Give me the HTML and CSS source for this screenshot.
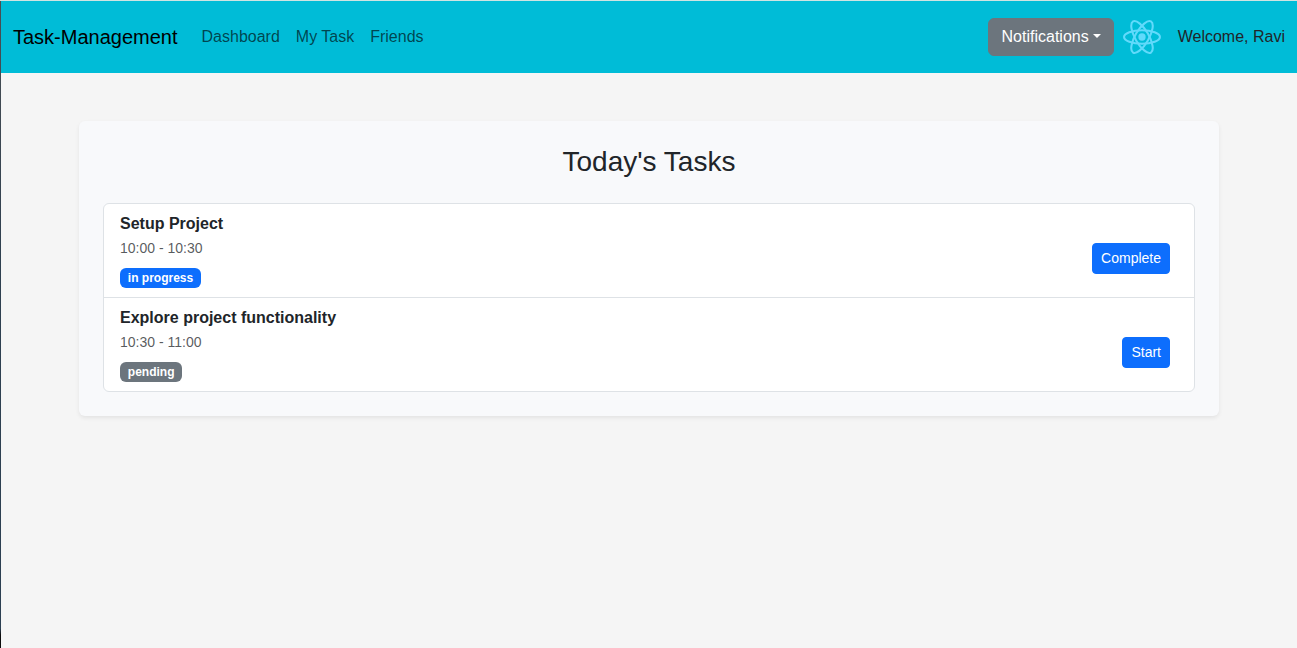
FILE: index.html
```html
<!DOCTYPE html>
<html lang="en">
<head>
<meta charset="utf-8">
<title>Task-Management</title>
<link rel="stylesheet" href="styles.css">
</head>
<body>
<nav class="navbar">
  <a class="brand">Task-Management</a>
  <div class="nav-links">
    <a class="nav-link">Dashboard</a>
    <a class="nav-link">My Task</a>
    <a class="nav-link">Friends</a>
  </div>
  <button class="btn btn-secondary">Notifications<span class="caret"></span></button>
  <svg class="avatar" viewBox="-11.5 -10.23174 23 20.46348">
    <circle r="2.2" fill="#61dafb"/>
    <g stroke="#61dafb" stroke-width="1.25" fill="none">
      <ellipse rx="10.8" ry="4.1"/>
      <ellipse rx="10.8" ry="4.1" transform="rotate(60)"/>
      <ellipse rx="10.8" ry="4.1" transform="rotate(120)"/>
    </g>
  </svg>
  <span class="welcome">Welcome, Ravi</span>
</nav>
<main class="card">
  <h3 class="card-title">Today's Tasks</h3>
  <ul class="task-list">
    <li class="task">
      <div class="task-info">
        <strong class="task-name">Setup Project</strong>
        <span class="task-time">10:00 - 10:30</span>
        <span class="badge badge-primary">in progress</span>
      </div>
      <button class="btn btn-primary">Complete</button>
    </li>
    <li class="task">
      <div class="task-info">
        <strong class="task-name">Explore project functionality</strong>
        <span class="task-time">10:30 - 11:00</span>
        <span class="badge badge-secondary">pending</span>
      </div>
      <button class="btn btn-primary">Start</button>
    </li>
  </ul>
</main>
</body>
</html>
```

FILE: styles.css
```css
* { box-sizing: border-box; }
body {
  margin: 0;
  min-height: 100vh;
  padding-left: 1px;
  border-top: 1px solid #d0e4e2;
  background: linear-gradient(#4a4f54, #2f4050 40%, #2c3f52 97%, #0c0c0c 98%) 0 0 / 1px 100% no-repeat #f5f5f5;
  color: #212529;
  font: 16px/24px "Liberation Sans", Arial, sans-serif;
}
.navbar {
  display: flex;
  align-items: center;
  height: 72px;
  padding: 0 12px;
  background: #00bcd7;
}
.brand {
  margin-right: 16px;
  font-size: 20px;
  line-height: 30px;
  color: #000;
}
.nav-links { display: flex; flex: 1; }
.nav-link { padding: 8px; color: rgba(0, 0, 0, .65); }
.btn {
  border: 1px solid;
  color: #fff;
  font-family: inherit;
  white-space: nowrap;
}
.btn-secondary {
  padding: 6px 12px 6px 12.4px;
  border-color: #6c757d;
  border-radius: 6px;
  background: #6c757d;
  font-size: 16px;
  line-height: 24px;
}
.caret {
  display: inline-block;
  margin-left: 4px;
  vertical-align: 4px;
  border-top: 4.8px solid;
  border-right: 4.8px solid transparent;
  border-left: 4.8px solid transparent;
}
.avatar { width: 40px; height: 34px; margin-left: 8px; }
.welcome { margin-left: 16px; }
.card {
  width: 1140px;
  margin: 48px auto 0;
  padding: 24px;
  border-radius: 6px;
  background: #f8f9fb;
  box-shadow: 0 2px 4px rgba(0, 0, 0, .075);
}
.card-title {
  margin: 0 0 24px;
  font-size: 28px;
  font-weight: 500;
  line-height: 34px;
  text-align: center;
}
.task-list {
  margin: 0;
  padding: 0;
  list-style: none;
  border: 1px solid #dee2e6;
  border-radius: 6px;
  background: #fff;
}
.task {
  display: flex;
  justify-content: space-between;
  align-items: center;
  height: 93px;
  padding: 8px 24px 8px 16px;
}
.task + .task { height: 94px; border-top: 1px solid #dee2e6; }
.task-info { display: flex; flex-direction: column; align-items: flex-start; height: 77px; }
.task-time { font-size: 14px; color: rgba(33, 37, 41, .75); }
.badge {
  margin-top: 8px;
  padding: 4px 7.8px;
  border-radius: 6px;
  color: #fff;
  font-size: 12px;
  font-weight: 700;
  line-height: 12px;
}
.badge-primary { background: #0d6efd; }
.badge-secondary { background: #6c757d; }
.btn-primary {
  margin-top: 16px;
  padding: 4px 8px;
  border-color: #0d6efd;
  border-radius: 4px;
  background: #0d6efd;
  font-size: 14px;
  line-height: 21px;
}
```
